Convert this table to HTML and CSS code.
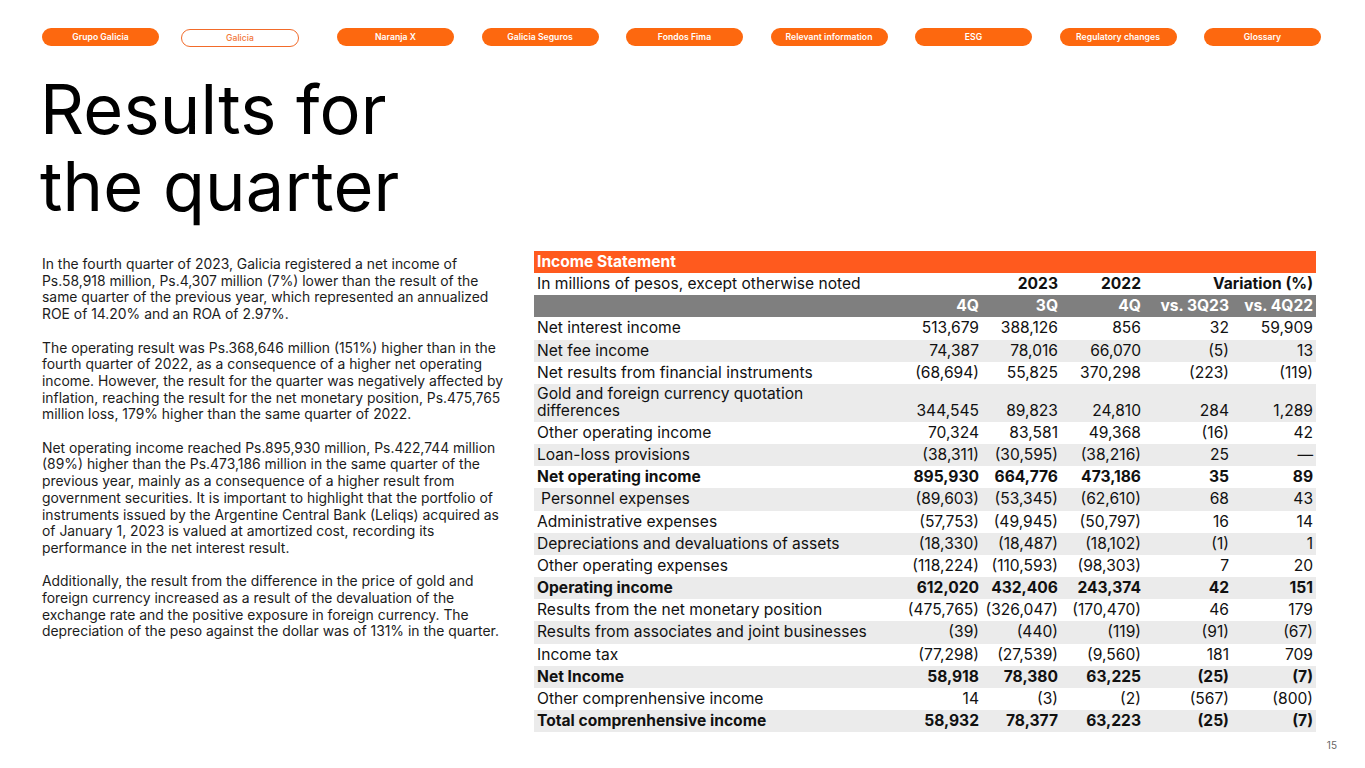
FILE: index.html
```html
<!DOCTYPE html>
<html lang="en">
<head>
<meta charset="utf-8">
<title>Results for the quarter</title>
<link rel="stylesheet" href="styles.css">
</head>
<body>
<div class="page">
  <nav class="nav">
    <a class="pill">Grupo Galicia</a>
    <a class="pill pill-active">Galicia</a>
    <a class="pill">Naranja X</a>
    <a class="pill">Galicia Seguros</a>
    <a class="pill">Fondos Fima</a>
    <a class="pill">Relevant information</a>
    <a class="pill">ESG</a>
    <a class="pill">Regulatory changes</a>
    <a class="pill">Glossary</a>
  </nav>

  <h1 class="title">Results for<br>the quarter</h1>

  <div class="content">
    <div class="text">
      <p>In the fourth quarter of 2023, Galicia registered a net income of Ps.58,918 million, Ps.4,307 million (7%) lower than the result of the same quarter of the previous year, which represented an annualized ROE of 14.20% and an ROA of 2.97%.</p>
      <p>The operating result was Ps.368,646 million (151%) higher than in the fourth quarter of 2022, as a consequence of a higher net operating income. However, the result for the quarter was negatively affected by inflation, reaching the result for the net monetary position, Ps.475,765 million loss, 179% higher than the same quarter of 2022.</p>
      <p>Net operating income reached Ps.895,930 million, Ps.422,744 million (89%) higher than the Ps.473,186 million in the same quarter of the previous year, mainly as a consequence of a higher result from government securities. It is important to highlight that the portfolio of instruments issued by the Argentine Central Bank (Leliqs) acquired as of January 1, 2023 is valued at amortized cost, recording its performance in the net interest result.</p>
      <p>Additionally, the result from the difference in the price of gold and foreign currency increased as a result of the devaluation of the exchange rate and the positive exposure in foreign currency. The depreciation of the peso against the dollar was of 131% in the quarter.</p>
    </div>

    <table class="fin">
      <colgroup>
        <col class="c-label"><col class="c1"><col class="c2"><col class="c3"><col class="c4"><col class="c5">
      </colgroup>
      <thead>
        <tr class="r-title"><th colspan="6">Income Statement</th></tr>
        <tr class="r-years">
          <td>In millions of pesos, except otherwise noted</td>
          <th colspan="2">2023</th>
          <th>2022</th>
          <th colspan="2">Variation (%)</th>
        </tr>
        <tr class="r-head">
          <th></th><th>4Q</th><th>3Q</th><th>4Q</th><th>vs. 3Q23</th><th>vs. 4Q22</th>
        </tr>
      </thead>
      <tbody>
        <tr><td>Net interest income</td><td>513,679</td><td>388,126</td><td>856</td><td>32</td><td>59,909</td></tr>
        <tr><td>Net fee income</td><td>74,387</td><td>78,016</td><td>66,070</td><td>(5)</td><td>13</td></tr>
        <tr><td>Net results from financial instruments</td><td>(68,694)</td><td>55,825</td><td>370,298</td><td>(223)</td><td>(119)</td></tr>
        <tr class="two"><td>Gold and foreign currency quotation<br>differences</td><td>344,545</td><td>89,823</td><td>24,810</td><td>284</td><td>1,289</td></tr>
        <tr><td>Other operating income</td><td>70,324</td><td>83,581</td><td>49,368</td><td>(16)</td><td>42</td></tr>
        <tr><td>Loan-loss provisions</td><td>(38,311)</td><td>(30,595)</td><td>(38,216)</td><td>25</td><td>—</td></tr>
        <tr class="b"><td>Net operating income</td><td>895,930</td><td>664,776</td><td>473,186</td><td>35</td><td>89</td></tr>
        <tr><td class="indent">Personnel expenses</td><td>(89,603)</td><td>(53,345)</td><td>(62,610)</td><td>68</td><td>43</td></tr>
        <tr><td>Administrative expenses</td><td>(57,753)</td><td>(49,945)</td><td>(50,797)</td><td>16</td><td>14</td></tr>
        <tr><td>Depreciations and devaluations of assets</td><td>(18,330)</td><td>(18,487)</td><td>(18,102)</td><td>(1)</td><td>1</td></tr>
        <tr><td>Other operating expenses</td><td>(118,224)</td><td>(110,593)</td><td>(98,303)</td><td>7</td><td>20</td></tr>
        <tr class="b"><td>Operating income</td><td>612,020</td><td>432,406</td><td>243,374</td><td>42</td><td>151</td></tr>
        <tr><td>Results from the net monetary position</td><td>(475,765)</td><td>(326,047)</td><td>(170,470)</td><td>46</td><td>179</td></tr>
        <tr><td>Results from associates and joint businesses</td><td>(39)</td><td>(440)</td><td>(119)</td><td>(91)</td><td>(67)</td></tr>
        <tr><td>Income tax</td><td>(77,298)</td><td>(27,539)</td><td>(9,560)</td><td>181</td><td>709</td></tr>
        <tr class="b"><td>Net Income</td><td>58,918</td><td>78,380</td><td>63,225</td><td>(25)</td><td>(7)</td></tr>
        <tr><td>Other comprenhensive income</td><td>14</td><td>(3)</td><td>(2)</td><td>(567)</td><td>(800)</td></tr>
        <tr class="b"><td>Total comprenhensive income</td><td>58,932</td><td>78,377</td><td>63,223</td><td>(25)</td><td>(7)</td></tr>
      </tbody>
    </table>
  </div>

  <footer class="footer"><span class="pagenum">15</span></footer>
</div>
</body>
</html>
```

FILE: styles.css
```css
* { box-sizing: border-box; }

html, body {
  margin: 0;
  padding: 0;
  background: #ffffff;
}

body {
  font-family: Inter, "Noto Sans", "Liberation Sans", sans-serif;
  color: #111111;
}

.page {
  width: 1365px;
  height: 768px;
  padding: 28px 44px 0 42px;
  position: relative;
  overflow: hidden;
}

/* Navigation */
.nav {
  display: flex;
  gap: 27.5px;
}

.pill {
  display: flex;
  align-items: center;
  justify-content: center;
  flex: none;
  width: 117px;
  height: 18px;
  border-radius: 9px;
  background: #fd680f;
  color: #ffffff;
  font-size: 8.6px;
  font-weight: 600;
  text-decoration: none;
  letter-spacing: 0.05px;
}

.pill-active {
  width: 118px;
  margin-left: -5.5px;
  margin-right: 10.5px;
  margin-top: 1px;
  background: #ffffff;
  color: #f2773a;
  border: 1.5px solid #f26b2a;
  font-weight: 500;
}

/* Title */
.title {
  margin: 24px 0 0 -2px;
  font-size: 68.5px;
  font-weight: 400;
  line-height: 77px;
  letter-spacing: 0.2px;
  color: #000000;
}

/* Content */
.content {
  display: flex;
  gap: 29px;
  margin-top: 26px;
}

.text {
  width: 463px;
  flex: none;
  padding-top: 5px;
  font-size: 13.9px;
  line-height: 16.7px;
  color: #1c1c1c;
}

.text p {
  margin: 0 0 16.7px 0;
}

/* Table */
.fin {
  width: 782px;
  border-collapse: collapse;
  table-layout: fixed;
  font-size: 15.6px;
  color: #111111;
}

.c-label { width: 340px; }
.c1 { width: 108px; }
.c2 { width: 79px; }
.c3 { width: 83px; }
.c4 { width: 88px; }
.c5 { width: 84px; }

.fin td, .fin th {
  padding: 3px 3px 3px 3px;
  line-height: 16.15px;
  text-align: right;
  vertical-align: bottom;
  white-space: nowrap;
  font-weight: 400;
}

.fin td:first-child {
  text-align: left;
}

.fin tr.two td {
  line-height: 16.5px;
  padding-top: 2.5px;
  padding-bottom: 2.5px;
}

.r-title th {
  background: #ff5a1e;
  color: #ffffff;
  font-weight: 700;
  text-align: left;
}

.r-years th {
  font-weight: 700;
}

.r-head th {
  background: #7f7f7f;
  color: #ffffff;
  font-weight: 700;
}

.fin tbody tr:nth-child(even) td {
  background: #ebebeb;
}

.fin tr.b td {
  font-weight: 700;
}

.fin td.indent {
  padding-left: 7px;
}

/* Footer */
.footer {
  position: absolute;
  right: 28px;
  bottom: 15px;
}

.pagenum {
  font-size: 10px;
  color: #666666;
}
```
